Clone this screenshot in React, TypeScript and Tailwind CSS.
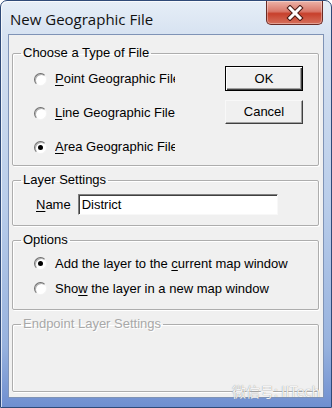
import type { ReactNode } from "react";

const ui = "font-['Liberation_Sans',Arial,sans-serif] text-[13px] leading-[16px] text-black";

function Radio({ checked = false }: { checked?: boolean }) {
  return (
    <span className="flex size-[13px] shrink-0 items-center justify-center rounded-full border border-t-[#6e6e6e] border-l-[#6e6e6e] border-r-[#f4f4f4] border-b-[#f4f4f4] bg-[radial-gradient(circle_at_60%_60%,#ffffff_0%,#ffffff_55%,#e2e2e2_100%)] shadow-[inset_1px_1px_0_#b0b0b0]">
      {checked && <span className="size-[5px] rounded-full bg-black" />}
    </span>
  );
}

function Option({ checked, clip, children }: { checked?: boolean; clip?: boolean; children: ReactNode }) {
  return (
    <div className="flex items-center gap-2">
      <Radio checked={checked} />
      <span className={`whitespace-nowrap ${clip ? "w-[120px] overflow-hidden" : ""}`}>{children}</span>
    </div>
  );
}

function Group({
  label,
  disabled = false,
  className,
  children,
}: {
  label: string;
  disabled?: boolean;
  className: string;
  children?: ReactNode;
}) {
  return (
    <fieldset
      className={`ml-[3px] mr-[4px] rounded-[2px] border border-[#adadad] shadow-[inset_1px_1px_0_#ffffff,1px_1px_0_#ffffff] ${className}`}
    >
      <legend
        className={`ml-[8px] px-[2px] ${
          disabled ? "text-[#a8a8a8] [text-shadow:1px_1px_0_#ffffff]" : ""
        }`}
      >
        {label}
      </legend>
      {children}
    </fieldset>
  );
}

export default function App() {
  return (
    <div className={`${ui} relative h-[408px] w-[332px] overflow-hidden`}>
      <div className="flex h-full flex-col rounded-t-[7px] border border-[#2f4a78] bg-[linear-gradient(180deg,#e6eef7_0%,#d4e0f0_10%,#b9cdea_50%,#97b2de_85%,#6f8fd0_100%)] shadow-[inset_1px_1px_0_rgba(255,255,255,0.7)]">
        {/* title bar */}
        <div className="flex h-[33px] shrink-0 items-start justify-between">
          <span className="mt-[8px] ml-[9px] font-['Open_Sans',sans-serif] text-[15px] leading-[20px] text-[#111]">
            New Geographic File
          </span>
          <span className="mr-[8px] flex h-[24px] w-[57px] items-center justify-center rounded-b-[5px] border border-t-0 border-[#6a2a24] bg-[linear-gradient(180deg,#ecb3a8_0%,#d9786a_45%,#c7402c_55%,#d6705c_100%)] shadow-[inset_0_0_0_1px_rgba(255,255,255,0.35)]">
            <svg width="18" height="16" viewBox="0 0 18 16">
              <path d="M4 3 L14 13 M14 3 L4 13" stroke="#4a1a14" strokeWidth="5" strokeLinecap="square" />
              <path d="M4 3 L14 13 M14 3 L4 13" stroke="#ffffff" strokeWidth="3" strokeLinecap="square" />
            </svg>
          </span>
        </div>

        {/* client area */}
        <div className="mx-[7px] mb-[9px] flex flex-1 flex-col gap-[6px] border border-[#7f93b6] bg-[#f0f0f0] pt-[10px]">
          <Group label="Choose a Type of File" className="h-[121px]">
            <div className="flex">
              <div className="flex flex-col pl-[21px] pt-[1px]">
                <div className="flex h-[34px] items-center">
                  <Option clip>
                    <span className="underline underline-offset-2">P</span>oint Geographic File
                  </Option>
                </div>
                <div className="flex h-[34px] items-center">
                  <Option>
                    <span className="underline underline-offset-2">L</span>ine Geographic File
                  </Option>
                </div>
                <div className="flex h-[34px] items-center">
                  <Option checked clip>
                    <span className="underline underline-offset-2">A</span>rea Geographic File
                  </Option>
                </div>
              </div>
              <div className="ml-auto mr-[15px] mt-[5px] flex flex-col gap-[9px]">
                <button className="h-[25px] w-[78px] border border-black bg-[#f0f0f0] shadow-[inset_1px_1px_0_#ffffff,inset_-1px_-1px_0_#404040,inset_-2px_-2px_0_#a0a0a0]">
                  OK
                </button>
                <button className="h-[24px] w-[78px] border border-t-[#f8f8f8] border-l-[#f8f8f8] border-r-[#404040] border-b-[#404040] bg-[#f0f0f0] shadow-[inset_-1px_-1px_0_#a0a0a0]">
                  Cancel
                </button>
              </div>
            </div>
          </Group>

          <Group label="Layer Settings" className="h-[54px]">
            <div className="mt-[6px] flex items-center gap-[7px] pl-[23px]">
              <span>
                <span className="underline underline-offset-2">N</span>ame
              </span>
              <div className="flex h-[21px] w-[200px] items-center border border-t-[#808080] border-l-[#808080] border-r-[#f8f8f8] border-b-[#f8f8f8] bg-white pl-[3px] shadow-[inset_1px_1px_0_#404040]">
                District
              </div>
            </div>
          </Group>

          <Group label="Options" className="h-[78px]">
            <div className="flex flex-col pl-[21px] pt-[3px]">
              <div className="flex h-[25px] items-center">
                <Option checked>
                  Add the layer to the <span className="underline underline-offset-2">c</span>urrent map window
                </Option>
              </div>
              <div className="flex h-[25px] items-center">
                <Option>
                  Sho<span className="underline underline-offset-2">w</span> the layer in a new map window
                </Option>
              </div>
            </div>
          </Group>

          <Group label="Endpoint Layer Settings" disabled className="h-[76px]" />
        </div>
      </div>

      {/* watermark */}
      <span className="absolute right-[12px] bottom-[9px] font-['Noto_Sans_CJK_SC',sans-serif] text-[14px] leading-[16px] text-white/90 [text-shadow:0_0_1px_#7a7a7a]">
        微信号: IITech
      </span>
    </div>
  );
}
